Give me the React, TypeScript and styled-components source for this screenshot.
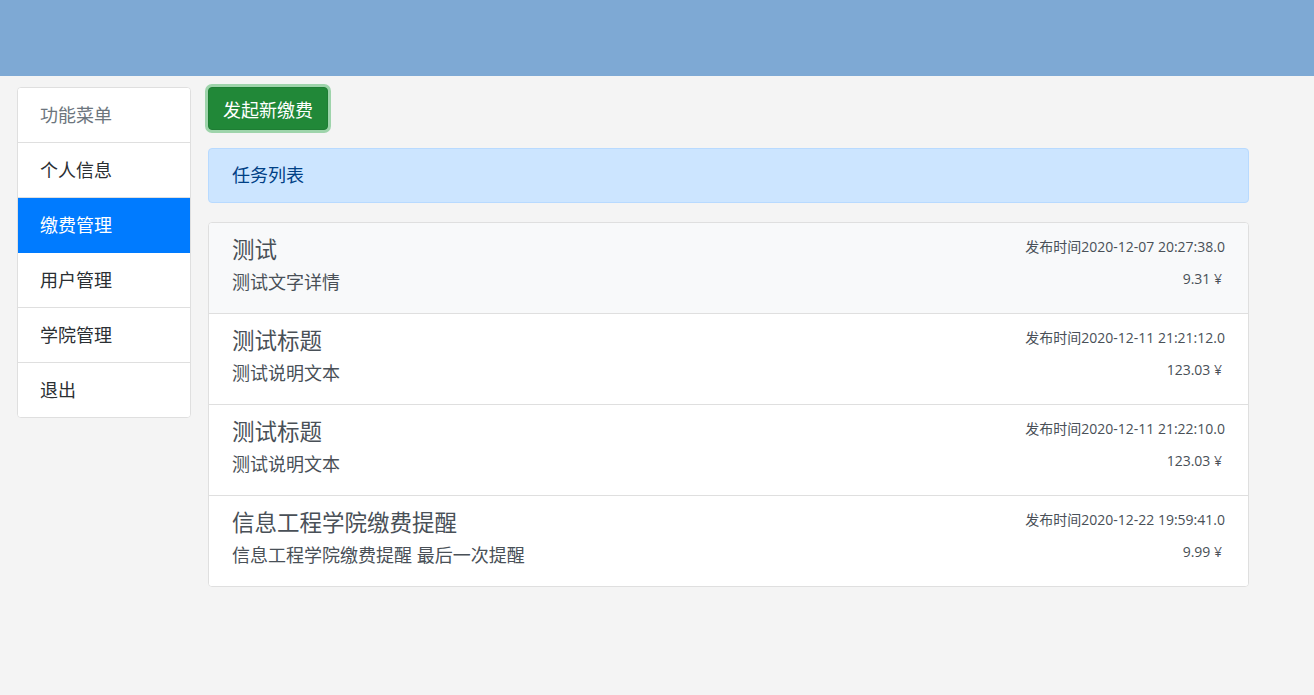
import React from 'react'
import styled, { createGlobalStyle } from 'styled-components'

const GlobalStyle = createGlobalStyle`
  html, body {
    margin: 0;
    padding: 0;
    background: #f4f4f4;
    font-family: "Open Sans", "Noto Sans CJK SC", sans-serif;
    color: #212529;
  }
  * { box-sizing: border-box; }
`

const Header = styled.header`
  height: 76px;
  background: #7ea9d4;
`

const Body = styled.div`
  display: flex;
  align-items: flex-start;
  gap: 17px;
  padding: 11px 0 0 17px;
`

const Menu = styled.ul`
  width: 174px;
  margin: 0;
  padding: 0;
  list-style: none;
  background: #fff;
  border: 1px solid #dfdfdf;
  border-radius: 4px;
  overflow: hidden;
`

const MenuItem = styled.li<{ $active?: boolean; $muted?: boolean }>`
  padding: 12px 22px;
  line-height: 30px;
  font-size: 18px;
  border-bottom: 1px solid #dfdfdf;
  background: ${p => (p.$active ? '#007bff' : '#fff')};
  color: ${p => (p.$active ? '#fff' : p.$muted ? '#6c757d' : '#2b2f33')};
  border-color: ${p => (p.$active ? '#007bff' : '#dfdfdf')};
  cursor: pointer;
  &:last-child { border-bottom: none; }
`

const Main = styled.main`
  width: 1041px;
  display: flex;
  flex-direction: column;
  align-items: flex-start;
`

const Button = styled.button`
  height: 43px;
  padding: 0 14px;
  font-family: inherit;
  font-size: 18px;
  color: #fff;
  background: #218838;
  border: 1px solid #1e7e34;
  border-radius: 4px;
  box-shadow: 0 0 0 3px rgba(72, 180, 97, 0.5);
  cursor: pointer;
`

const Alert = styled.div`
  width: 100%;
  margin-top: 18px;
  padding: 12px 23px;
  line-height: 29px;
  font-size: 18px;
  color: #004085;
  background: #cce5ff;
  border: 1px solid #b8daff;
  border-radius: 4px;
`

const List = styled.div`
  width: 100%;
  margin-top: 19px;
  background: #fff;
  border: 1px solid #dfdfdf;
  border-radius: 4px;
  overflow: hidden;
`

const Row = styled.div<{ $hover?: boolean }>`
  display: flex;
  justify-content: space-between;
  height: 91px;
  padding: 12px 23px 0 23px;
  background: ${p => (p.$hover ? '#f8f9fa' : '#fff')};
  border-bottom: 1px solid #dfdfdf;
  &:last-child { border-bottom: none; height: 90px; }
`

const Left = styled.div`
  display: flex;
  flex-direction: column;
`

const Title = styled.div`
  font-size: 22.5px;
  line-height: 30px;
  color: #495057;
`

const Desc = styled.div`
  margin-top: 2px;
  font-size: 18px;
  line-height: 30px;
  color: #495057;
`

const Right = styled.div`
  display: flex;
  flex-direction: column;
  align-items: flex-end;
  font-size: 14px;
  color: #495057;
`

const Time = styled.div`
  line-height: 24px;
`

const Price = styled.div`
  margin-top: 8px;
  padding-right: 3px;
  line-height: 24px;
`

const menu = ['个人信息', '缴费管理', '用户管理', '学院管理', '退出']

const tasks = [
  { title: '测试', desc: '测试文字详情', time: '2020-12-07 20:27:38.0', price: '9.31' },
  { title: '测试标题', desc: '测试说明文本', time: '2020-12-11 21:21:12.0', price: '123.03' },
  { title: '测试标题', desc: '测试说明文本', time: '2020-12-11 21:22:10.0', price: '123.03' },
  { title: '信息工程学院缴费提醒', desc: '信息工程学院缴费提醒 最后一次提醒', time: '2020-12-22 19:59:41.0', price: '9.99' },
]

export default function App() {
  return (
    <>
      <GlobalStyle />
      <Header />
      <Body>
        <Menu>
          <MenuItem $muted>功能菜单</MenuItem>
          {menu.map(m => (
            <MenuItem key={m} $active={m === '缴费管理'}>{m}</MenuItem>
          ))}
        </Menu>
        <Main>
          <Button>发起新缴费</Button>
          <Alert>任务列表</Alert>
          <List>
            {tasks.map((t, i) => (
              <Row key={i} $hover={i === 0}>
                <Left>
                  <Title>{t.title}</Title>
                  <Desc>{t.desc}</Desc>
                </Left>
                <Right>
                  <Time>发布时间{t.time}</Time>
                  <Price>{t.price} ¥</Price>
                </Right>
              </Row>
            ))}
          </List>
        </Main>
      </Body>
    </>
  )
}
